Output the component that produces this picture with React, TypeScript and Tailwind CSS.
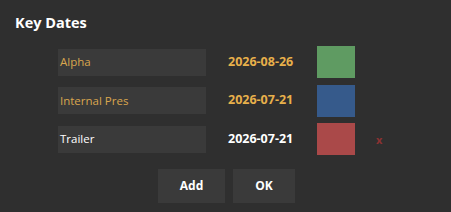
import React, { useState } from 'react';

interface KeyDate {
    name: string;
    date: string;
    color: string;
    highlight: boolean;
    removable: boolean;
}

const initialDates: KeyDate[] = [
    { name: 'Alpha', date: '2026-08-26', color: 'bg-[#5f9b62]', highlight: true, removable: false },
    { name: 'Internal Pres', date: '2026-07-21', color: 'bg-[#365a8b]', highlight: true, removable: false },
    { name: 'Trailer', date: '2026-07-21', color: 'bg-[#aa4949]', highlight: false, removable: true },
];

const App: React.FC = () => {
    const [dates] = useState<KeyDate[]>(initialDates);

    return (
        <div className="w-[451px] h-[212px] bg-[#2f2f2f] overflow-hidden" style={{ fontFamily: '"Open Sans", "Noto Sans", sans-serif' }}>
            <h1 className="pl-[15px] pt-[13px] text-[14.5px] leading-[20px] font-bold text-white">Key Dates</h1>

            {/* Date rows */}
            <div className="mt-[13px] pl-[58px] flex flex-col gap-[6.5px]">
                {dates.map((d, i) => (
                    <div key={i} className="flex items-center h-8">
                        <div className="w-[148px] h-[27px] bg-[#3a3a3a] flex items-center pl-[2px]">
                            <span className={`text-[11.5px] ${d.highlight ? 'text-[#d9a64e]' : 'text-white'}`}>{d.name}</span>
                        </div>
                        <span className={`ml-[22px] w-[66px] text-[12.5px] font-bold ${d.highlight ? 'text-[#e8b04b]' : 'text-white'}`}>{d.date}</span>
                        <div className={`ml-[23px] w-[38px] h-8 ${d.color}`} />
                        {d.removable && (
                            <span className="ml-[21px] text-[11px] font-bold text-[#8c3232] leading-none">x</span>
                        )}
                    </div>
                ))}
            </div>

            {/* Actions */}
            <div className="mt-[14px] flex justify-center gap-2 pl-[2px]">
                <button className="w-[67px] h-[34px] bg-[#3a3a3a] text-white text-[12px] font-bold">Add</button>
                <button className="w-[62px] h-[34px] bg-[#3a3a3a] text-white text-[12px] font-bold">OK</button>
            </div>
        </div>
    );
};

export default App;
